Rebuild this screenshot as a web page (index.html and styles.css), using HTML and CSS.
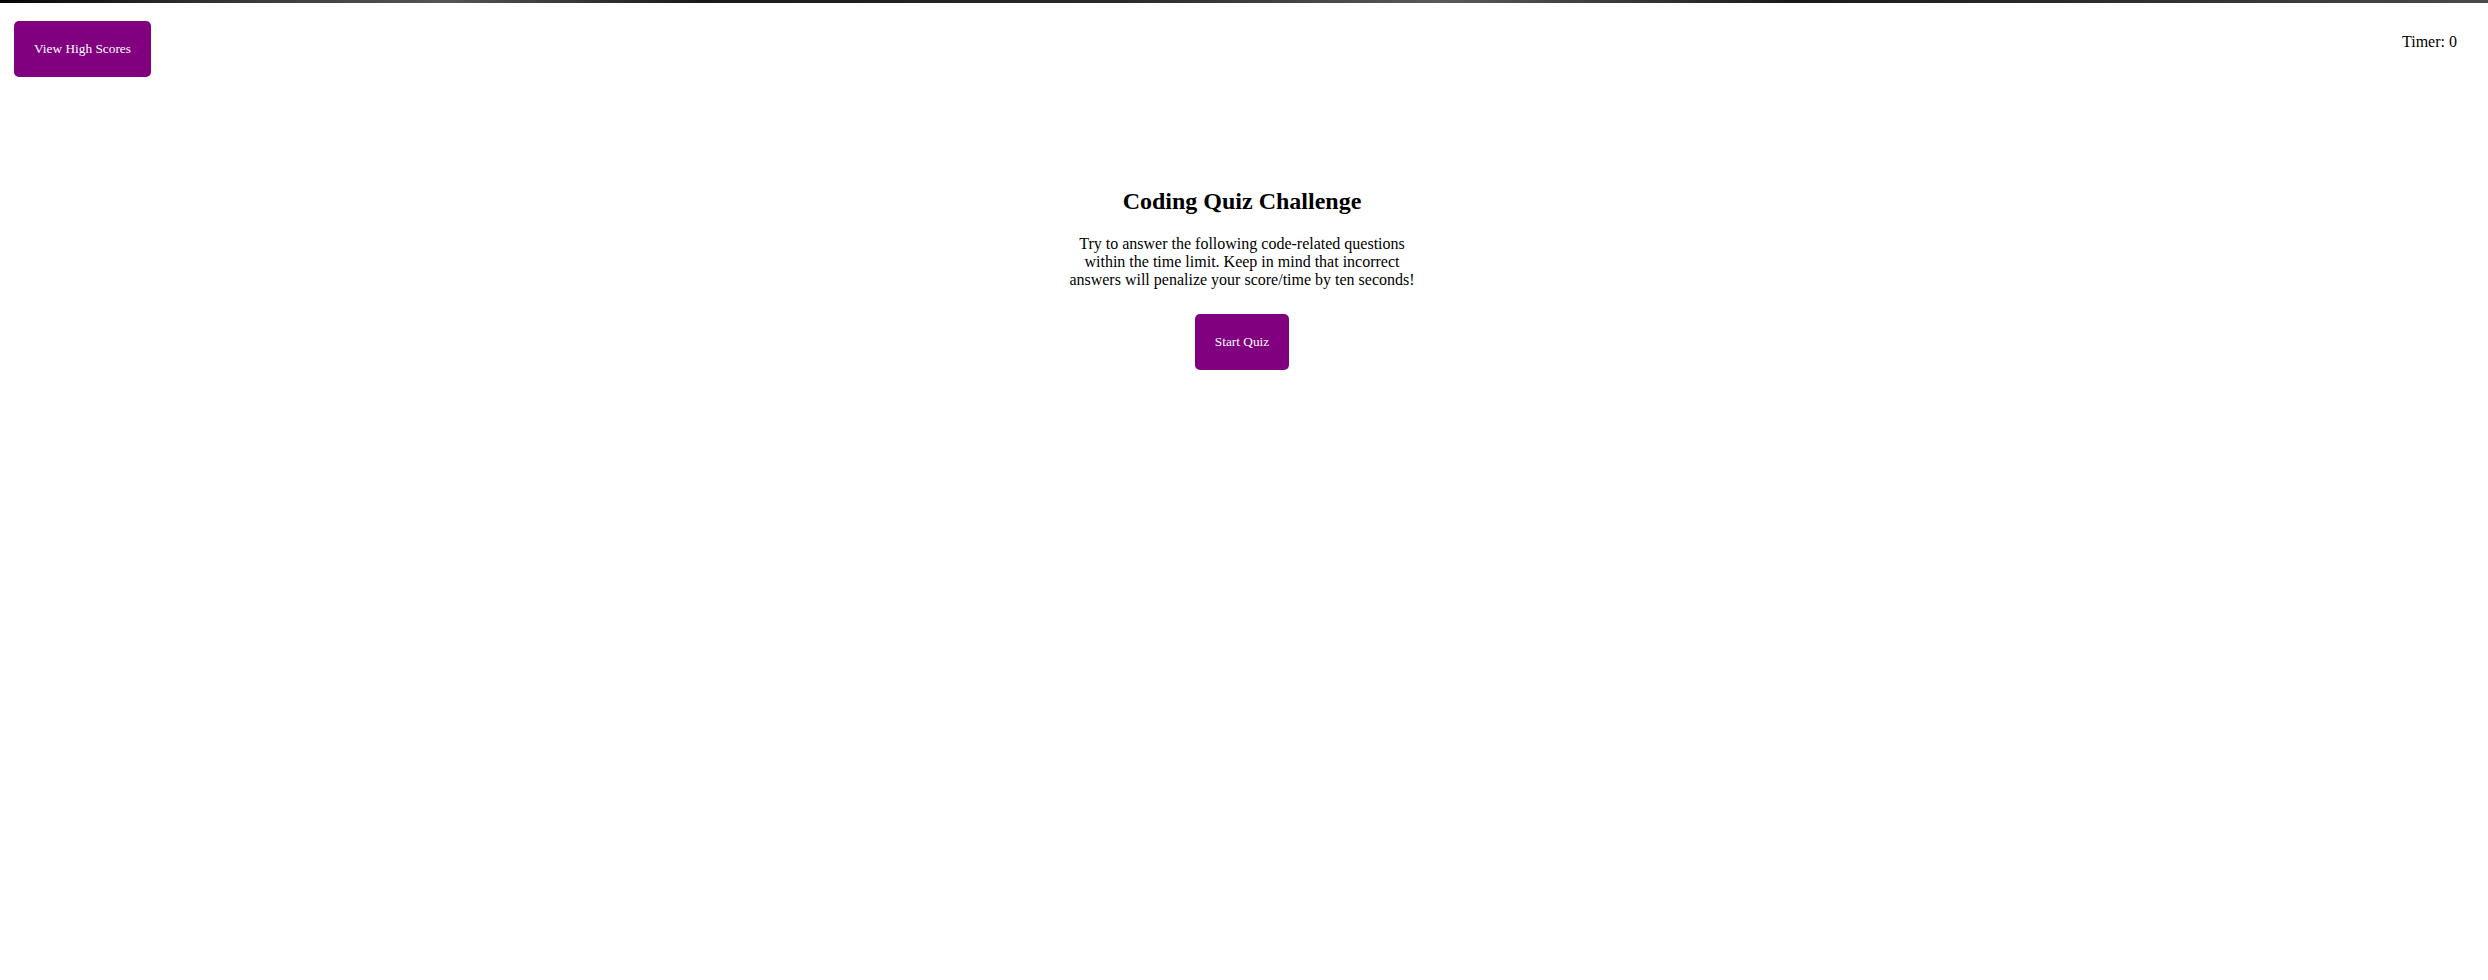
FILE: index.html
```html
<!DOCTYPE html>
<html lang="en">
<head>
<meta charset="utf-8">
<title>Coding Quiz Challenge</title>
<link rel="stylesheet" href="styles.css">
</head>
<body>
<div class="topline"></div>
<header class="header">
  <button class="btn">View High Scores</button>
  <div class="timer">Timer: 0</div>
</header>
<main class="main">
  <section class="intro">
    <h2 class="title">Coding Quiz Challenge</h2>
    <p class="desc">Try to answer the following code-related questions within the time limit. Keep in mind that incorrect answers will penalize your score/time by ten seconds!</p>
    <button class="btn start">Start Quiz</button>
  </section>
</main>
</body>
</html>
```

FILE: styles.css
```css
html, body {
  margin: 0;
  padding: 0;
  background: #ffffff;
}
body {
  font-family: "Liberation Serif", "Times New Roman", serif;
  font-size: 16px;
  color: #000;
}
.topline {
  height: 3px;
  background: linear-gradient(90deg, #050505 0%, #3a3a3a 10%, #555 18%, #1a1a1a 28%, #2a2a2a 45%, #5a5a5a 58%, #1a1a1a 72%, #333 88%, #4a4a4a 100%);
}
.header {
  display: flex;
  justify-content: space-between;
  align-items: flex-start;
  padding: 18px 31px 0 14px;
}
.btn {
  font-family: "Liberation Serif", "Times New Roman", serif;
  font-size: 13.333px;
  color: #ffffff;
  background: #800080;
  border: none;
  border-radius: 5px;
  padding: 20px;
  line-height: 16px;
  cursor: pointer;
}
.timer {
  padding-top: 12px;
}
.main {
  display: flex;
  justify-content: center;
  padding-top: 91px;
  padding-right: 4px;
}
.intro {
  width: 350px;
  display: flex;
  flex-direction: column;
  align-items: center;
  text-align: center;
}
.title {
  font-size: 24px;
  font-weight: bold;
  margin: 20px 0 0;
}
.desc {
  margin: 20px 0 0;
}
.start {
  margin-top: 25px;
}
```
